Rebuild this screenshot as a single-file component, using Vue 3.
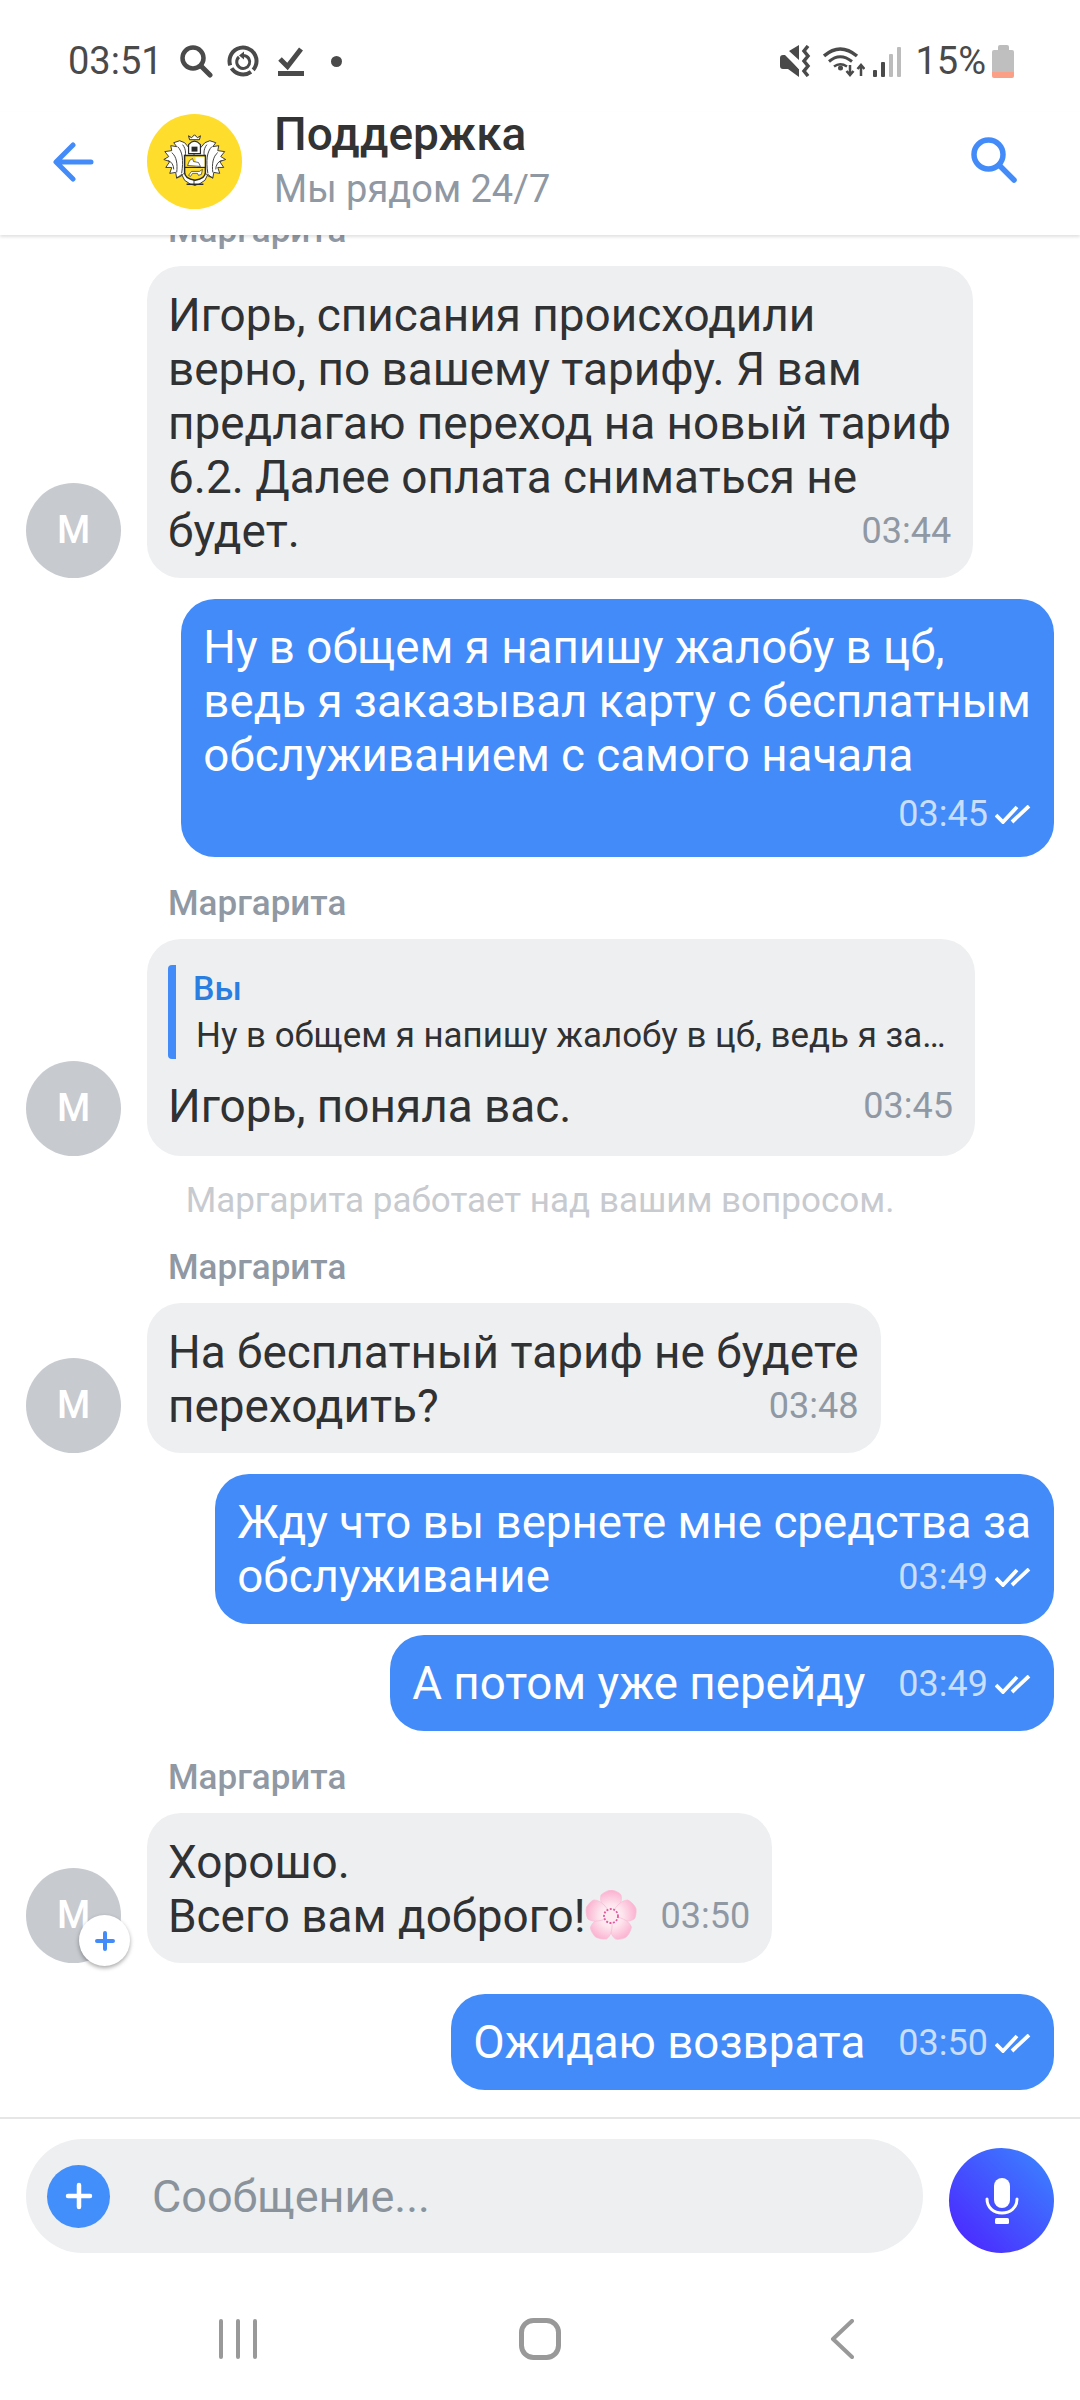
<template>
  <div class="screen">
    <div class="status">
      <span class="clock">03:51</span>
      <svg class="st-search" width="34" height="34" viewBox="0 0 34 34">
        <circle cx="14" cy="14" r="10.5" fill="none" stroke="#4a4a4a" stroke-width="4.5" />
        <path d="M22 22l9 9" stroke="#4a4a4a" stroke-width="5" stroke-linecap="round" />
      </svg>
      <svg class="st-sync" width="32" height="32" viewBox="0 0 32 32" fill="none" stroke="#4a4a4a">
        <circle cx="16" cy="16" r="13.5" stroke-width="4" stroke-dasharray="26 3 22 3 31 0" transform="rotate(-70 16 16)" />
        <path d="M12 12a6.5 6.5 0 1 0 5-1.5" stroke-width="3" />
        <path d="M17 6.5v8l-5-4z" fill="#4a4a4a" stroke="none" />
      </svg>
      <svg class="st-check" width="26" height="30" viewBox="0 0 26 30">
        <path d="M2 13l7.500 7.500L23 3" fill="none" stroke="#4a4a4a" stroke-width="5" />
        <rect y="25" width="26" height="5" fill="#4a4a4a" />
      </svg>
      <i class="st-dot"></i>
      <span class="spacer"></span>
      <svg class="st-mute" width="31" height="32" viewBox="0 0 31 32">
        <path d="M0 13q0-3 3-3h2l14 14v8L8 24H3q-3 0-3-3zM9 6l10-6v15z" fill="#4a4a4a" />
        <path d="M2 3l19 22" stroke="#fff" stroke-width="2" />
        <path d="M28 1l-4 5 4 5-4 5 4 5-4 5 4 5" fill="none" stroke="#4a4a4a" stroke-width="3.500" />
      </svg>
      <svg class="st-wifi" width="42" height="32" viewBox="0 0 42 32" fill="none" stroke="#4a4a4a">
        <path d="M1 11Q17-3 34 11" stroke-width="3.500" />
        <path d="M6 16.500Q17 7 29 16.500" stroke-width="3" />
        <path d="M11 21.500Q17 17 24 21.500" stroke-width="2.500" />
        <circle cx="17.500" cy="23" r="2.500" fill="#4a4a4a" stroke="none" />
        <path d="M27 20v10M23.500 26l3.500 4 3.500-4M38 31V20M34.500 24l3.500-4 3.500 4" stroke-width="2.500" />
      </svg>
      <div class="st-signal">
        <i class="on s1"></i><i class="on s2"></i><i class="s3"></i><i class="s4"></i>
      </div>
      <span class="percent">15%</span>
      <div class="st-battery"><i class="nub"></i><i class="cell"></i></div>
    </div>

    <header class="head">
      <svg class="back" width="41" height="40" viewBox="0 0 41 40" fill="none" stroke="#428bf9" stroke-width="5" stroke-linecap="round" stroke-linejoin="round">
        <path d="M38 20H4M20 3L3 20l17 17" />
      </svg>
      <svg class="logo" width="95" height="95" viewBox="0 0 96 96">
        <circle cx="48" cy="48" r="48" fill="#fedd2c" />
        <g v-for="t in ['', 'translate(96.500 0) scale(-1 1)']" :key="t" :transform="t">
          <path d="M44 36l-6-7-5-2-6 2 3 4-6-1 1 5-7 1 4 5-5 3 6 2-4 6 6 0-2 6 6-1 1 6 5-4 3 6 6 4 5 1V36z" fill="#fff" stroke="#2b2b2b" stroke-width=".9" />
          <path d="M31 33c5 5 6 14 4 27M25 39c5 4 6 12 5 20M21 47c4 1 6 5 6 9M36 31c4 5 3 10 2 14M30 64c3 0 5-1 7-4" fill="none" stroke="#2b2b2b" stroke-width=".9" />
        </g>
        <path d="M42 40V31q6-7 12 0v9z" fill="#fff" stroke="#2b2b2b" stroke-width="1.200" />
        <path d="M43 26l-1-4 3 2 3-3 3 3 3-2-1 4z" fill="#fff" stroke="#2b2b2b" stroke-width="1" />
        <path d="M45 33h6v5h-6z" fill="#2b2b2b" />
        <path d="M38 42h21v17q0 6-10.500 8Q38 65 38 59z" fill="#fedd2c" stroke="#2b2b2b" stroke-width="1.500" />
        <path d="M49 43.500h9v10h-9z" fill="#fff" />
        <path d="M38 54h21" stroke="#2b2b2b" stroke-width="1.200" />
        <path d="M41 52l2-5 3-2 1 3 5 1 2 4zM42 62l3-4h8l3-2-1 5-3 1-1-2h-5l-2 3z" fill="#fff" stroke="#2b2b2b" stroke-width=".7" />
        <path d="M40 71h17" stroke="#2b2b2b" stroke-width="1.500" />
      </svg>
      <div class="head-text">
        <div class="title">Поддержка</div>
        <div class="subtitle">Мы рядом 24/7</div>
      </div>
      <span class="spacer"></span>
      <svg class="find" width="46" height="46" viewBox="0 0 46 46" fill="none" stroke="#428bf9" stroke-width="5.500" stroke-linecap="round">
        <circle cx="17.500" cy="17.500" r="14.500" />
        <path d="M28.500 28.500L43 43" />
      </svg>
    </header>

    <main class="chat">
      <template v-for="(m, i) in messages" :key="i">
        <div v-if="m.type === 'system'" class="system">{{ m.text }}</div>
        <div v-else-if="m.type === 'in'" class="incoming">
          <div class="name">Маргарита</div>
          <div class="in-row">
            <div class="avatar">
              М
              <span v-if="m.badge" class="badge">
                <svg width="20" height="20" viewBox="0 0 20 20"><path d="M10 2v16M2 10h16" stroke="#428bf9" stroke-width="4" stroke-linecap="round" /></svg>
              </span>
            </div>
            <div class="bubble gray">
              <div v-if="m.reply" class="reply">
                <div class="reply-who">Вы</div>
                <div class="reply-text">{{ m.reply }}</div>
              </div>
              <div v-for="line in m.lines.slice(0, -1)" :key="line">{{ line }}</div>
              <div class="row">
                <span class="last">{{ m.lines[m.lines.length - 1] }}<svg v-if="m.flower" class="flower" width="54" height="50" viewBox="0 0 54 50">
                  <defs>
                    <radialGradient id="petal" gradientUnits="userSpaceOnUse" cx="27" cy="26" r="27">
                      <stop offset="0" stop-color="#fff" />
                      <stop offset=".45" stop-color="#fde3ec" />
                      <stop offset="1" stop-color="#fbaccd" />
                    </radialGradient>
                  </defs>
                  <path v-for="a in [0, 72, 144, 216, 288]" :key="a" d="M27 26C20 20 15 12 17 5c3-3 8-5 11-5 4 1 8 3 9 5 2 7-3 15-10 21z" fill="url(#petal)" stroke="#f9bdd5" stroke-width=".7" :transform="`rotate(${a} 27 26)`" />
                  <circle cx="27" cy="26" r="7" fill="#fdeaf1" stroke="#e2599b" stroke-width="1.800" stroke-dasharray="2 1.500" />
                </svg></span>
                <span class="time">{{ m.time }}</span>
              </div>
            </div>
          </div>
        </div>
        <div v-else class="outgoing" :class="{ far: m.far, near: m.near }">
          <div class="bubble blue">
            <div v-for="line in m.lines.slice(0, -1)" :key="line">{{ line }}</div>
            <div class="row">
              <span class="last">{{ m.lines[m.lines.length - 1] }}</span>
              <span class="meta">
                <span class="time">{{ m.time }}</span>
                <svg width="36" height="19" viewBox="0 0 36 19" fill="none" stroke="#fff" stroke-width="3.800">
                  <path d="M1 10l7 7L22 2M17 17L34 1" />
                </svg>
              </span>
            </div>
          </div>
        </div>
      </template>
    </main>

    <div class="composer">
      <div class="field">
        <span class="add">
          <svg width="28" height="28" viewBox="0 0 28 28"><path d="M14 3v22M3 14h22" stroke="#fff" stroke-width="4.500" stroke-linecap="round" /></svg>
        </span>
        <input class="input" placeholder="Сообщение..." />
      </div>
      <button class="mic">
        <svg width="34" height="46" viewBox="0 0 34 46" fill="none">
          <rect x="9" y="0" width="16" height="30" rx="8" fill="#fff" />
          <path d="M2 21c0 9 7 14 15 14s15-5 15-14" stroke="#fff" stroke-width="3" stroke-linecap="round" />
          <rect x="10" y="40" width="14" height="6" rx="1.500" fill="#fff" />
        </svg>
      </button>
    </div>

    <nav class="nav">
      <span class="nav-item">
        <svg width="38" height="40" viewBox="0 0 38 40" stroke="#999" stroke-width="4" stroke-linecap="round"><path d="M2 2v36M19 2v36M36 2v36" /></svg>
      </span>
      <span class="nav-item">
        <svg width="42" height="42" viewBox="0 0 42 42"><rect x="2.500" y="2.500" width="37" height="37" rx="12" fill="none" stroke="#999" stroke-width="5" /></svg>
      </span>
      <span class="nav-item">
        <svg width="24" height="40" viewBox="0 0 24 40"><path d="M22 2L3 20l19 18" fill="none" stroke="#999" stroke-width="4" stroke-linecap="round" stroke-linejoin="round" /></svg>
      </span>
    </nav>
  </div>
</template>

<script setup>
const quote = 'Ну в общем я напишу жалобу в цб, ведь я заказывал карту с бесплатным обслуживанием с самого начала'

const messages = [
  {
    type: 'in',
    time: '03:44',
    lines: [
      'Игорь, списания происходили',
      'верно, по вашему тарифу. Я вам',
      'предлагаю переход на новый тариф',
      '6.2. Далее оплата сниматься не',
      'будет.'
    ]
  },
  {
    type: 'out',
    time: '03:45',
    lines: [
      'Ну в общем я напишу жалобу в цб,',
      'ведь я заказывал карту с бесплатным',
      'обслуживанием с самого начала',
      ''
    ]
  },
  { type: 'in', time: '03:45', reply: quote, lines: ['Игорь, поняла вас.'] },
  { type: 'system', text: 'Маргарита работает над вашим вопросом.' },
  { type: 'in', time: '03:48', lines: ['На бесплатный тариф не будете', 'переходить?'] },
  { type: 'out', time: '03:49', lines: ['Жду что вы вернете мне средства за', 'обслуживание'] },
  { type: 'out', near: true, time: '03:49', lines: ['А потом уже перейду'] },
  { type: 'in', time: '03:50', badge: true, flower: true, lines: ['Хорошо.', 'Всего вам доброго!'] },
  { type: 'out', far: true, time: '03:50', lines: ['Ожидаю возврата'] }
]
</script>

<style>
body {
  margin: 0;
  background: #fff;
}
</style>

<style scoped>
.screen {
  width: 1080px;
  height: 2400px;
  display: flex;
  flex-direction: column;
  overflow: hidden;
  background: #fff;
  font-family: Roboto, "Noto Sans", sans-serif;
  color: #303133;
}

.spacer {
  flex: 1;
}

/* status bar */
.status {
  height: 112px;
  flex: none;
  display: flex;
  align-items: center;
  box-sizing: border-box;
  padding: 10px 66px 0 68px;
  color: #4a4a4a;
}

.clock {
  font-size: 38px;
  margin-right: 16px;
}

.st-search {
  margin-right: 14px;
}

.st-sync {
  margin-right: 19px;
}

.st-check {
  margin-right: 27px;
}

.st-dot {
  width: 11px;
  height: 11px;
  border-radius: 50%;
  background: #4a4a4a;
}

.st-mute {
  margin-right: 12px;
}

.st-wifi {
  margin-right: 8px;
}

.st-signal {
  display: flex;
  align-items: flex-end;
  gap: 4px;
  height: 32px;
  margin-right: 14px;
}

.st-signal i {
  width: 4px;
  background: #bcbcbc;
  border-radius: 1px;
}

.st-signal i.on {
  background: #4a4a4a;
}

.s1 { height: 7px; }
.s2 { height: 15px; }
.s3 { height: 23px; }
.s4 { height: 30px; }

.percent {
  font-size: 38px;
  margin-right: 6px;
}

.st-battery {
  width: 22px;
  display: flex;
  flex-direction: column;
  align-items: center;
}

.nub {
  width: 11px;
  height: 5px;
  background: #bcbcbc;
  border-radius: 2px 2px 0 0;
}

.cell {
  width: 22px;
  height: 28px;
  border-radius: 2px;
  background: linear-gradient(#bfbfbf 78%, #fb9f87 78%);
}

/* header */
.head {
  height: 123px;
  flex: none;
  display: flex;
  align-items: center;
  box-sizing: border-box;
  padding: 0 63px 24px 53px;
  position: relative;
  z-index: 2;
  background: #fff;
  box-shadow: 0 2px 3px rgba(0, 0, 0, 0.12);
}

.back {
  margin-right: 53px;
}

.logo {
  margin-right: 32px;
}

.find {
  margin-top: -3px;
}

.title {
  font-size: 46px;
  font-weight: 500;
  line-height: 55px;
  color: #333;
}

.subtitle {
  font-size: 38px;
  line-height: 55px;
  color: #8f98a3;
}

/* messages */
.chat {
  flex: 1;
  min-height: 0;
  overflow: hidden;
  display: flex;
  flex-direction: column;
  justify-content: flex-end;
  box-sizing: border-box;
  padding: 0 26px 27px;
  font-size: 45.9px;
  line-height: 54px;
  white-space: nowrap;
}

.incoming {
  flex: none;
  margin-top: 27px;
}

.name {
  margin-left: 142px;
  margin-bottom: 15px;
  font-size: 35px;
  font-weight: 500;
  line-height: 40px;
  color: #8f98a3;
}

.in-row {
  display: flex;
  align-items: flex-end;
  gap: 26px;
}

.avatar {
  position: relative;
  flex: none;
  width: 95px;
  height: 95px;
  border-radius: 50%;
  background: #c7cacf;
  color: #fff;
  font-size: 38px;
  font-weight: 500;
  line-height: 95px;
  text-align: center;
}

.badge {
  position: absolute;
  left: 53px;
  top: 47px;
  width: 51px;
  height: 51px;
  display: flex;
  align-items: center;
  justify-content: center;
  border-radius: 50%;
  background: #fff;
  box-shadow: 0 2px 4px rgba(0, 0, 0, 0.35);
}

.bubble {
  box-sizing: border-box;
  padding: 22px 22px 20px;
  border-radius: 34px;
}

.gray {
  width: fit-content;
  max-width: 828px;
  padding-left: 21px;
  background: #eeeff1;
}

.blue {
  padding-right: 23px;
  font-size: 45.7px;
  background: #428bf9;
  color: #fff;
}

.row {
  display: flex;
  justify-content: space-between;
  align-items: center;
  gap: 23px;
}

.blue .row {
  gap: 33px;
}

.reply + .row {
  margin-bottom: 3px;
}

.last {
  display: flex;
  align-items: center;
}

.last:empty + .meta {
  transform: translateY(4px);
}

.flower {
  flex: none;
  margin: -6px 0 -4px -2px;
}

.time {
  font-size: 36px;
  color: #8f98a3;
}

.meta {
  display: flex;
  align-items: center;
  gap: 7px;
  margin-left: auto;
}

.meta .time {
  color: rgba(255, 255, 255, 0.72);
}

.reply {
  margin: 4px 0 20px;
  padding: 0 0 0 17px;
  border-left: 8px solid #428bf9;
  border-radius: 4px;
  line-height: 47px;
}

.reply-who {
  font-size: 34px;
  font-weight: 500;
  color: #2a7de1;
}

.reply-text {
  padding-left: 3px;
  font-size: 34.9px;
  overflow: hidden;
  text-overflow: ellipsis;
}

.system {
  flex: none;
  margin-top: 25px;
  font-size: 35px;
  line-height: 40px;
  text-align: center;
  color: #c7cacf;
}

.outgoing {
  flex: none;
  display: flex;
  justify-content: flex-end;
  margin-top: 21px;
}

.outgoing.near {
  margin-top: 11px;
}

.outgoing.far {
  margin-top: 31px;
}

/* composer */
.composer {
  flex: none;
  display: flex;
  align-items: flex-end;
  justify-content: space-between;
  box-sizing: border-box;
  height: 136px;
  padding: 21px 26px 0;
  border-top: 2px solid #e6e6e6;
}

.field {
  width: 897px;
  height: 114px;
  display: flex;
  align-items: center;
  box-sizing: border-box;
  padding-left: 21px;
  border-radius: 57px;
  background: #edeff1;
}

.add {
  flex: none;
  width: 63px;
  height: 63px;
  display: flex;
  align-items: center;
  justify-content: center;
  border-radius: 50%;
  background: #428ffb;
}

.input {
  flex: 1;
  min-width: 0;
  margin-left: 42px;
  border: none;
  outline: none;
  padding: 0;
  background: transparent;
  font: 45px Roboto, "Noto Sans", sans-serif;
}

.input::placeholder {
  color: #8a939b;
  opacity: 1;
}

.mic {
  width: 105px;
  height: 105px;
  padding: 0;
  border: none;
  border-radius: 50%;
  display: flex;
  align-items: center;
  justify-content: center;
  background: linear-gradient(45deg, #4d1fff, #3a88ff);
}

/* system navigation */
.nav {
  flex: none;
  height: 147px;
  box-sizing: border-box;
  display: flex;
  justify-content: center;
  align-items: flex-start;
  padding-top: 65px;
}

.nav-item {
  width: 302px;
  height: 42px;
  display: flex;
  align-items: center;
  justify-content: center;
}
</style>
